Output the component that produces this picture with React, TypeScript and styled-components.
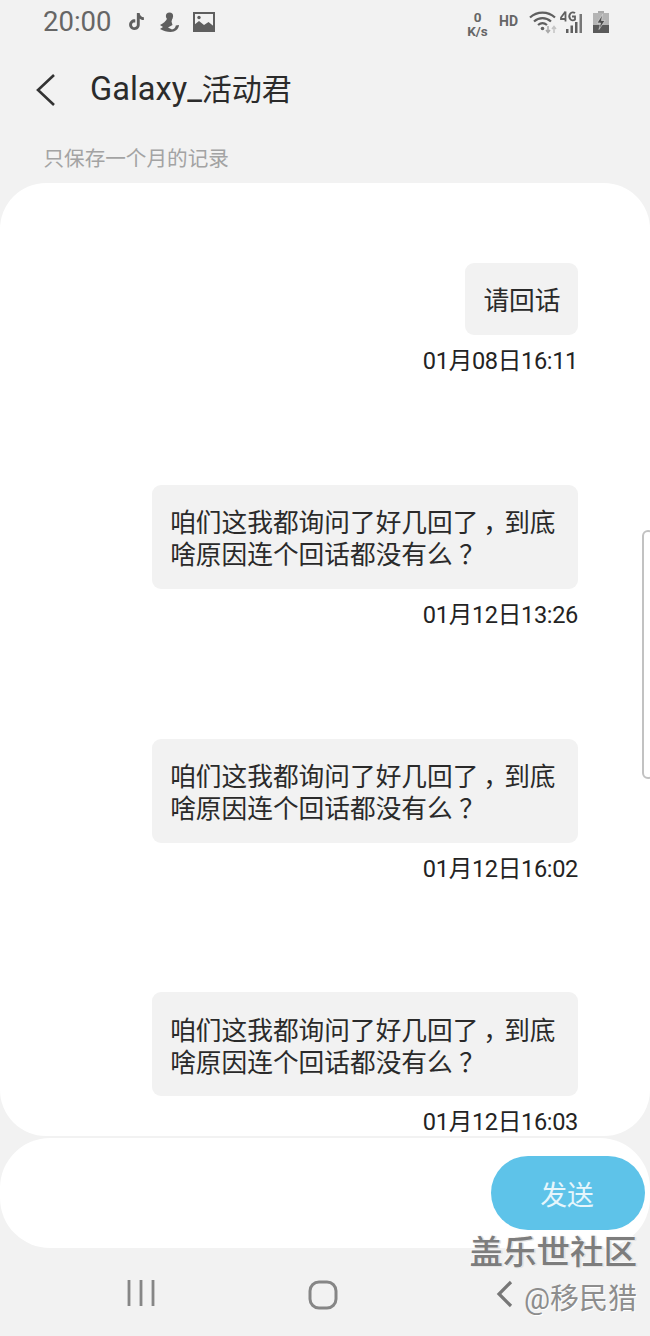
import React from "react";
import styled, { createGlobalStyle } from "styled-components";
import { SiTiktok } from "react-icons/si";

const Global = createGlobalStyle`
  html, body { margin: 0; padding: 0; background: #f2f2f2; }
  body { font-family: Roboto, "Noto Sans CJK SC", sans-serif; }
`;

const Page = styled.div`
  position: relative;
  width: 650px;
  height: 1336px;
  overflow: hidden;
  background: #f2f2f2;
  display: flex;
  flex-direction: column;
`;

const StatusBar = styled.div`
  height: 45px;
  flex: none;
  display: flex;
  align-items: center;
  padding: 0 41px 2px 43px;
  box-sizing: border-box;
  color: #636363;
`;

const Time = styled.span`
  font-size: 27.5px;
  line-height: 45px;
  width: 85px;
  color: #666;
`;

const NotifIcons = styled.div`
  display: flex;
  align-items: center;
  gap: 14px;
  flex: 1;
`;

const RightIcons = styled.div`
  display: flex;
  align-items: center;
`;

const Speed = styled.span`
  font-size: 13.5px;
  font-weight: 700;
  line-height: 14px;
  text-align: center;
  width: 25px;
  color: #666;
  margin-right: 9px;
  margin-top: 4px;
`;

const HD = styled.span`
  font-size: 14px;
  font-weight: 700;
  width: 20px;
  color: #666;
  margin-right: 10px;
  margin-top: -2px;
`;

const Header = styled.div`
  height: 90px;
  flex: none;
  display: flex;
  align-items: center;
  padding-left: 36px;
  padding-bottom: 1px;
  box-sizing: border-box;
`;

const Title = styled.h1`
  margin: 0 0 0 34px;
  font-size: 30px;
  font-weight: 400;
  color: #2b2b2b;
  line-height: 40px;
`;

const TitleLatin = styled.span`
  font-size: 32.6px;
`;

const Note = styled.div`
  height: 48px;
  flex: none;
  padding-left: 43.5px;
  font-size: 20.6px;
  line-height: 48px;
  color: #a3a3a3;
`;

const Card = styled.main`
  height: 953px;
  flex: none;
  box-sizing: border-box;
  background: #fff;
  border-radius: 46px;
  padding: 80px 72px 0 0;
  overflow: hidden;
  display: flex;
  flex-direction: column;
  align-items: flex-end;
`;

const Message = styled.div`
  display: flex;
  flex-direction: column;
  align-items: flex-end;
  margin-bottom: 110.8px;
`;

const Bubble = styled.div<{ $short?: boolean }>`
  background: #f2f2f2;
  border-radius: 9px;
  box-sizing: border-box;
  padding: ${(p) => (p.$short ? "21.5px 17.5px 18.5px 18.5px" : "22.5px 22.5px 17.5px 18px")};
  font-size: 25.7px;
  line-height: 32px;
  color: #2a2a2a;
  white-space: pre-line;
`;

const Punct = styled.span`
  display: inline-block;
  width: 1em;
  text-align: center;
  font-feature-settings: "palt";
`;

const Stamp = styled.div`
  margin-top: 13px;
  font-size: 23.6px;
  letter-spacing: -0.35px;
  line-height: 26px;
  color: #232323;
`;

const InputBar = styled.div`
  height: 110px;
  flex: none;
  margin-top: 2px;
  background: #fff;
  border-radius: 50px;
  display: flex;
  justify-content: flex-end;
  padding: 18px 5px 0 0;
  box-sizing: border-box;
`;

const SendButton = styled.button`
  width: 154px;
  height: 74px;
  border: 0;
  border-radius: 37px;
  background: #5ec3e9;
  color: #e6f6fc;
  font-family: inherit;
  font-size: 26.8px;
  padding: 0 2px 0 0;
`;

const NavBar = styled.nav`
  flex: 1;
  display: flex;
  align-items: flex-start;
  padding-top: 32px;
  color: #868686;
`;

const NavSlot = styled.div<{ $w: number }>`
  width: ${(p) => p.$w}px;
  flex: none;
  display: flex;
  justify-content: flex-end;
`;

const Watermark = styled.div`
  position: absolute;
  right: 13px;
  top: 1234px;
  font-size: 33.5px;
  line-height: 38px;
  font-weight: 500;
  color: #7d7d7d;
  text-shadow: 1.5px 0 0 #e4e4e4, 1.5px 1px 0 #e4e4e4, -1px -1px 0 #fafafa;
`;

const Handle = styled.div`
  position: absolute;
  right: 13px;
  top: 1280px;
  font-size: 29px;
  line-height: 38px;
  color: #8d8d8d;
  text-shadow: 1px 1px 0 #fff;
`;

const ScrollEdge = styled.div`
  position: absolute;
  left: 642px;
  top: 530px;
  width: 12px;
  height: 249px;
  box-sizing: border-box;
  border: 2px solid #c2c2c2;
  border-radius: 7px;
  background: #fff;
`;

const DuckIcon = () => (
  <svg width="20" height="20" viewBox="0 0 20 20" fill="#5f5f5f">
    <circle cx="10.5" cy="4" r="3.6" />
    <path d="M8.5 6 L13.5 6 L12.5 9.5 L13.5 13 L9 15.5 L13 17.5 C15 17.3 16.5 15.8 16.8 13.5 L20 13 C19.7 16.8 16.5 20 11.5 20 C8 20 4.5 18.8 1 17 L4 15 L1 13 C4 11.5 7 9.5 8.5 6 Z" />
  </svg>
);

const PictureIcon = () => (
  <svg width="22" height="20" viewBox="0 0 22 20">
    <rect x="1" y="1" width="20" height="18" fill="none" stroke="#5f5f5f" strokeWidth="2" />
    <path d="M1 19 V13 L6 9 L11 13 L15.5 10 L21 14.5 V19 Z" fill="#5f5f5f" />
    <circle cx="6" cy="5.5" r="1.7" fill="#5f5f5f" />
  </svg>
);

const WifiIcon = () => (
  <svg width="28" height="24" viewBox="0 0 28 24" fill="none" style={{ marginRight: 3 }}>
    <path d="M1 7.5 C8 1 19 1 26 7.5" stroke="#5f5f5f" strokeWidth="2.2" />
    <path d="M5 11.5 C10 7 17 7 22 11.5" stroke="#5f5f5f" strokeWidth="2.2" />
    <path d="M9 15 C12 12.5 15 12.5 18 15" stroke="#5f5f5f" strokeWidth="2.2" />
    <circle cx="13.5" cy="18.5" r="1.8" fill="#5f5f5f" />
    <path d="M19 16 V22 M17 20 L19 22.5 L21 20" stroke="#a9a9a9" strokeWidth="1.5" />
    <path d="M25 23 V17 M23 19 L25 16.5 L27 19" stroke="#c4c4c4" strokeWidth="1.5" />
  </svg>
);

const SignalIcon = () => (
  <svg width="26" height="24" viewBox="0 0 26 24" style={{ marginRight: 7 }} aria-hidden="true">
    <path d="M5.5 1.5 L1 7.5 V9 H6 M5.5 1.5 V11.5" fill="none" stroke="#5f5f5f" strokeWidth="1.8" />
    <path d="M15 3.2 A3.5 4 0 1 0 15 9.5 V6.5 H12" fill="none" stroke="#5f5f5f" strokeWidth="1.8" />
    <rect x="6" y="19" width="2.5" height="4" fill="#5f5f5f" />
    <rect x="10.5" y="15.5" width="2.5" height="7.5" fill="#5f5f5f" />
    <rect x="15" y="12" width="2.5" height="11" fill="#5f5f5f" />
    <rect x="19.5" y="4" width="2.5" height="19" fill="#777" />
  </svg>
);

const BatteryIcon = () => (
  <svg width="16" height="22" viewBox="0 0 16 22">
    <rect x="5" y="0" width="6" height="2" fill="#aaa" />
    <rect x="0" y="2" width="16" height="20" fill="#b4b4b4" />
    <rect x="0" y="14" width="16" height="8" fill="#5a5a5a" />
    <path d="M9.5 3.5 L4 12 H7.5 L6 18.5 L12 9.5 H8.5 Z" fill="#4e4e4e" stroke="#e6e6e6" strokeWidth="0.6" />
  </svg>
);

const BackChevron = () => (
  <svg width="20" height="34" viewBox="0 0 20 34" fill="none">
    <path d="M18 2 L2 17 L18 32" stroke="#333" strokeWidth="2.6" />
  </svg>
);

const RecentsIcon = () => (
  <svg width="28" height="28" viewBox="0 0 28 28" fill="none">
    <path d="M2 0 V26 M14 0 V26 M26 0 V26" stroke="#868686" strokeWidth="2.8" />
  </svg>
);

const HomeIcon = () => (
  <svg width="30" height="30" viewBox="0 0 30 30" fill="none">
    <rect x="2" y="2" width="26" height="26" rx="9" stroke="#868686" strokeWidth="3" />
  </svg>
);

const NavBackIcon = () => (
  <svg width="17" height="28" viewBox="0 0 17 28" fill="none">
    <path d="M15 2 L3 14 L15 26" stroke="#777" strokeWidth="3.2" />
  </svg>
);

const LongText = () => (
  <>
    咱们这我都询问了好几回了<Punct>，</Punct>到底{"\n"}啥原因连个回话都没有么<Punct>？</Punct>
  </>
);

const messages = [
  { text: <>请回话</>, time: "01月08日16:11", short: true },
  { text: <LongText />, time: "01月12日13:26" },
  { text: <LongText />, time: "01月12日16:02" },
  { text: <LongText />, time: "01月12日16:03" },
];

export default function App() {
  return (
    <Page>
      <Global />
      <StatusBar>
        <Time>20:00</Time>
        <NotifIcons>
          <SiTiktok size={17} color="#5f5f5f" />
          <DuckIcon />
          <PictureIcon />
        </NotifIcons>
        <RightIcons>
          <Speed>0<br />K/s</Speed>
          <HD>HD</HD>
          <WifiIcon />
          <SignalIcon />
          <BatteryIcon />
        </RightIcons>
      </StatusBar>
      <Header>
        <BackChevron />
        <Title><TitleLatin>Galaxy_</TitleLatin>活动君</Title>
      </Header>
      <Note>只保存一个月的记录</Note>
      <Card>
        {messages.map((m, i) => (
          <Message key={i}>
            <Bubble $short={m.short}>{m.text}</Bubble>
            <Stamp>{m.time}</Stamp>
          </Message>
        ))}
      </Card>
      <InputBar>
        <SendButton>发送</SendButton>
      </InputBar>
      <NavBar>
        <NavSlot $w={155}><RecentsIcon /></NavSlot>
        <NavSlot $w={183}><HomeIcon /></NavSlot>
        <NavSlot $w={175}><NavBackIcon /></NavSlot>
      </NavBar>
      <Watermark>盖乐世社区</Watermark>
      <Handle>@移民猎</Handle>
      <ScrollEdge />
    </Page>
  );
}
